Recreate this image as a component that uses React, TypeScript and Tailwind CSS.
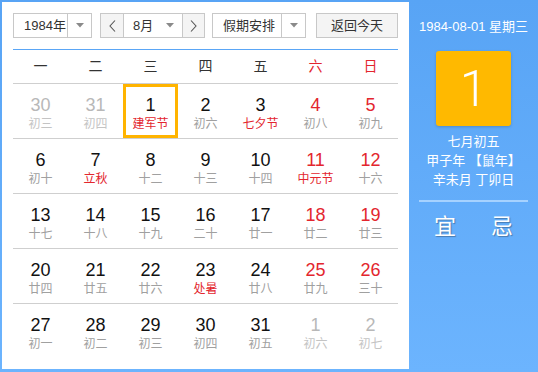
import React from "react";

type Day = {
  n: number;
  lunar: string;
  fest?: boolean;
  other?: boolean;
};

const weeks: Day[][] = [
  [
    { n: 30, lunar: "初三", other: true },
    { n: 31, lunar: "初四", other: true },
    { n: 1, lunar: "建军节", fest: true },
    { n: 2, lunar: "初六" },
    { n: 3, lunar: "七夕节", fest: true },
    { n: 4, lunar: "初八" },
    { n: 5, lunar: "初九" },
  ],
  [
    { n: 6, lunar: "初十" },
    { n: 7, lunar: "立秋", fest: true },
    { n: 8, lunar: "十二" },
    { n: 9, lunar: "十三" },
    { n: 10, lunar: "十四" },
    { n: 11, lunar: "中元节", fest: true },
    { n: 12, lunar: "十六" },
  ],
  [
    { n: 13, lunar: "十七" },
    { n: 14, lunar: "十八" },
    { n: 15, lunar: "十九" },
    { n: 16, lunar: "二十" },
    { n: 17, lunar: "廿一" },
    { n: 18, lunar: "廿二" },
    { n: 19, lunar: "廿三" },
  ],
  [
    { n: 20, lunar: "廿四" },
    { n: 21, lunar: "廿五" },
    { n: 22, lunar: "廿六" },
    { n: 23, lunar: "处暑", fest: true },
    { n: 24, lunar: "廿八" },
    { n: 25, lunar: "廿九" },
    { n: 26, lunar: "三十" },
  ],
  [
    { n: 27, lunar: "初一" },
    { n: 28, lunar: "初二" },
    { n: 29, lunar: "初三" },
    { n: 30, lunar: "初四" },
    { n: 31, lunar: "初五" },
    { n: 1, lunar: "初六", other: true },
    { n: 2, lunar: "初七", other: true },
  ],
];

const weekdays = ["一", "二", "三", "四", "五", "六", "日"];

function Caret() {
  return (
    <svg width="8" height="5" viewBox="0 0 8 5" className="shrink-0">
      <path d="M0 0 L8 0 L4 4.5 Z" fill="#8a8a8a" />
    </svg>
  );
}

function Chevron({ dir }: { dir: "left" | "right" }) {
  return (
    <svg width="7" height="12" viewBox="0 0 7 12">
      <path
        d={dir === "left" ? "M6 0.5 L1 6 L6 11.5" : "M1 0.5 L6 6 L1 11.5"}
        fill="none"
        stroke="#555"
        strokeWidth="1.1"
      />
    </svg>
  );
}

export default function App() {
  return (
    <div
      className="flex h-[372px] w-[538px] bg-gradient-to-b from-[#58a4f5] to-[#6cb4fe] text-[#333]"
      style={{ fontFamily: '"Liberation Sans", "Noto Sans CJK SC", sans-serif' }}
    >
      <div className="pb-[3px] pl-[2px] pt-[2px]">
        <div className="h-[367px] w-[407px] bg-white px-[11px] pt-[11px]">
          {/* controls */}
          <div className="flex h-[25px] items-stretch text-[13px]">
            <div className="flex w-[79px] border border-[#c8c8c8] bg-white">
              <div className="flex flex-1 items-center pl-[10px]">1984年</div>
              <div className="flex w-[24px] items-center justify-center border-l border-[#c8c8c8]">
                <Caret />
              </div>
            </div>
            <div className="ml-[8px] flex w-[105px] border border-[#c8c8c8]">
              <div className="flex w-[22px] items-center justify-center bg-[#f4f4f4]">
                <Chevron dir="left" />
              </div>
              <div className="flex w-[60px] items-center justify-between border-x border-[#c8c8c8] bg-white pl-[9px] pr-[8px]">
                <span>8月</span>
                <Caret />
              </div>
              <div className="flex flex-1 items-center justify-center bg-[#f4f4f4]">
                <Chevron dir="right" />
              </div>
            </div>
            <div className="ml-[7px] flex w-[94px] border border-[#c8c8c8] bg-white">
              <div className="flex flex-1 items-center pl-[10px]">假期安排</div>
              <div className="flex w-[24px] items-center justify-center border-l border-[#c8c8c8]">
                <Caret />
              </div>
            </div>
            <button className="ml-[10px] flex w-[82px] items-center justify-center border border-[#c8c8c8] bg-[#f4f4f4] text-[13px] text-[#333]">
              返回今天
            </button>
          </div>

          <div className="mt-[11px] h-px bg-[#5aa6f6]" />

          {/* weekday header */}
          <div className="grid h-[34px] grid-cols-7 border-b border-[#cfcfcf] text-[14px]">
            {weekdays.map((w, i) => (
              <div
                key={w}
                className={`flex items-center justify-center ${i >= 5 ? "text-[#e3262e]" : "text-[#333]"}`}
              >
                {w}
              </div>
            ))}
          </div>

          {/* days */}
          {weeks.map((week, wi) => (
            <div
              key={wi}
              className={`grid h-[55px] grid-cols-7 ${wi < weeks.length - 1 ? "border-b border-[#cfcfcf]" : ""}`}
            >
              {week.map((d, di) => {
                const selected = wi === 0 && d.n === 1 && !d.other;
                const numColor = d.other ? "text-[#b8b8b8]" : di >= 5 ? "text-[#e3262e]" : "text-[#111]";
                const lunarColor = d.other
                  ? "text-[#c4c4c4]"
                  : d.fest
                    ? "text-[#e3262e]"
                    : "text-[#a0a0a0]";
                return (
                  <div
                    key={di}
                    className={`flex h-[54px] flex-col items-center border-[3px] pt-[8px] ${selected ? "border-[#ffb400]" : "border-transparent"}`}
                  >
                    <div className={`text-[18px] leading-[20px] ${numColor}`}>{d.n}</div>
                    <div className={`mt-px text-[12px] leading-[16px] ${lunarColor}`}>{d.lunar}</div>
                  </div>
                );
              })}
            </div>
          ))}
        </div>
      </div>

      {/* right panel */}
      <div className="flex flex-1 flex-col items-center pt-[18px] text-white">
        <div className="text-[13px] leading-[18px]">1984-08-01 星期三</div>
        <div className="mt-[15px] flex h-[75px] w-[75px] items-center justify-center rounded-[3px] bg-[#ffb900] shadow-[0_1px_3px_rgba(0,0,0,0.18)]">
          <span
            className="text-[50px] font-light leading-none"
            style={{ fontFamily: 'Roboto, "Liberation Sans", sans-serif' }}
          >
            1
          </span>
        </div>
        <div className="mt-[6px] flex flex-col items-center text-[13px] leading-[19px]">
          <div>七月初五</div>
          <div>甲子年 【鼠年】</div>
          <div>辛未月 丁卯日</div>
        </div>
        <div className="mt-[11px] h-[2px] w-[109px] bg-[#a6d2ff]" />
        <div className="mt-[11px] flex gap-[35px] text-[22px] leading-[28px] [text-shadow:1px_1px_1px_rgba(0,0,0,0.3)]">
          <span>宜</span>
          <span>忌</span>
        </div>
      </div>
    </div>
  );
}
